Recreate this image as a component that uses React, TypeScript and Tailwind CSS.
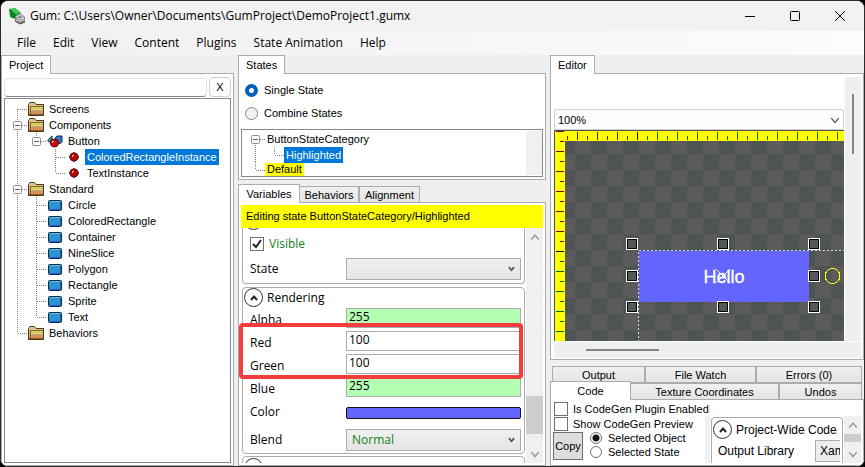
import React from "react";

const Chevron = ({ up, size = 8, color = "#555", w = 1.5 }: { up?: boolean; size?: number; color?: string; w?: number }) => (
  <svg width={size} height={size} viewBox="0 0 8 8" fill="none" stroke={color} strokeWidth={w}>
    <path d={up ? "M1 6 4 2.5 7 6" : "M1 2.5 4 6 7 2.5"} />
  </svg>
);

const Folder = () => (
  <svg width="16" height="14" viewBox="0 0 16 14">
    <path d="M.500 2.500 2 .5h4.500L8 2.500h7.500v11H.500z" fill="#d8b070" stroke="#4b3713" />
    <path d="M1 2.500 2.500 1h3.800L8 3h7v1H1z" fill="#d9c690" />
    <path d="M3 5h11v3.500H3z" fill="#d0d468" />
    <path d="M3 8.500h11v3.500H3z" fill="#cd9461" />
    <path d="M2.500 12V4.500H15M1 12.500h14" fill="none" stroke="#8a5a28" />
  </svg>
);

const Rect = () => (
  <svg width="14" height="11" viewBox="0 0 14 11">
    <rect x=".5" y=".5" width="13" height="10" rx="1" fill="#2c95d0" stroke="#06304a" />
    <path d="M2 1.500h10" stroke="#62c4e0" />
    <path d="M1.500 9.500h11v-7" fill="none" stroke="#2556c8" />
  </svg>
);

const Ball = () => (
  <svg width="10" height="10" viewBox="0 0 10 10">
    <path d="M5 .5 8 2l1.500 3L8 8 5 9.500 2 8 .5 5 2 2z" fill="#b40a0a" stroke="#4a0606" />
    <path d="M3 3h2v1H4v1H3z" fill="#ffb0a0" />
  </svg>
);

const Component = () => (
  <svg width="16" height="13" viewBox="0 0 16 13">
    <path d="M.5 5.500 5 1v6H2z" fill="#3f9c88" stroke="#14463c" />
    <path d="M8.500 2.500 10 1h5v6l-2 1.500H9z" fill="#3472c4" stroke="#0d2c58" />
    <circle cx="7.500" cy="8" r="4" fill="#cf0c0c" stroke="#4a0606" />
    <path d="M5 6h2v1H6v1H5z" fill="#ffc0b0" />
  </svg>
);

type Kind = "folder" | "rect" | "ball" | "component";
type Node = { label: string; kind: Kind; level: 0 | 1 | 2; open?: boolean; last?: boolean; rail?: boolean; first?: boolean; selected?: boolean };

const nodes: Node[] = [
  { label: "Screens", kind: "folder", level: 0, first: true },
  { label: "Components", kind: "folder", level: 0, open: true },
  { label: "Button", kind: "component", level: 1, open: true, last: true, rail: true },
  { label: "ColoredRectangleInstance", kind: "ball", level: 2, rail: true, selected: true },
  { label: "TextInstance", kind: "ball", level: 2, rail: true, last: true },
  { label: "Standard", kind: "folder", level: 0, open: true },
  { label: "Circle", kind: "rect", level: 1, rail: true },
  { label: "ColoredRectangle", kind: "rect", level: 1, rail: true },
  { label: "Container", kind: "rect", level: 1, rail: true },
  { label: "NineSlice", kind: "rect", level: 1, rail: true },
  { label: "Polygon", kind: "rect", level: 1, rail: true },
  { label: "Rectangle", kind: "rect", level: 1, rail: true },
  { label: "Sprite", kind: "rect", level: 1, rail: true },
  { label: "Text", kind: "rect", level: 1, rail: true, last: true },
  { label: "Behaviors", kind: "folder", level: 0, last: true },
];

/* One 19px wide cell of dotted guide lines in front of a tree item. */
const Guide = ({ up, down, across, box }: { up?: boolean; down?: boolean; across?: boolean; box?: boolean }) => (
  <svg className="shrink-0" width="19" height="16" viewBox="0 0 19 16">
    <g stroke="#808080" strokeDasharray="1 1">
      {up && <path d="M9.500 0v8" />}
      {down && <path d="M9.500 8v8" />}
      {across && <path d="M10 8.500h9" />}
    </g>
    {box && (
      <g transform="translate(5 4)">
        <rect x=".5" y=".5" width="8" height="8" rx="1" fill="#fcfcfc" stroke="#919191" />
        <path d="M2 4.500h5" stroke="#4b63a7" />
      </g>
    )}
  </svg>
);

const TreeRow = ({ n }: { n: Node }) => (
  <li className="flex h-4 items-center">
    {n.level === 1 && <Guide up={n.label === "Button" || n.rail} down={n.rail} />}
    {n.level === 2 && <Guide up={n.rail} down={n.rail} />}
    {n.level === 2 && <Guide />}
    <Guide up={!n.first} down={!n.last} across box={n.open} />
    <span className="mr-0.5 flex w-[18px] shrink-0 justify-center">
      {n.kind === "folder" && <Folder />}
      {n.kind === "rect" && <Rect />}
      {n.kind === "ball" && <Ball />}
      {n.kind === "component" && <Component />}
    </span>
    <span className={n.selected ? "bg-[#0078d7] px-0.5 leading-4 text-white" : "px-0.5 leading-4"}>{n.label}</span>
  </li>
);

const WpfScroll = ({ thumb }: { thumb: React.ReactNode }) => (
  <div className="flex w-[17px] shrink-0 flex-col items-center bg-[#f0f0f0] py-1">
    <Chevron up color="#999" size={10} w={1.2} />
    {thumb}
    <Chevron color="#999" size={10} w={1.2} />
  </div>
);

const Expander = () => (
  <button aria-label="Collapse" className="flex size-[19px] shrink-0 items-center justify-center rounded-full border border-[#333] bg-white">
    <Chevron up color="#222" w={2} />
  </button>
);

const Field = ({ label, value, fill }: { label: string; value: string; fill: string }) => (
  <label className="flex h-5 items-center">
    <span className="w-24 shrink-0 self-end">{label}</span>
    <input defaultValue={value} className={`h-5 w-full min-w-0 border border-[#abadb3] px-0.5 pb-[3px] outline-none ${fill}`} />
  </label>
);

const Select = ({ label, value, name }: { label: string; value: string; name: string }) => (
  <div className="flex items-center">
    <label htmlFor={name} className="w-24 shrink-0">{label}</label>
    <div className="grid min-w-0 flex-1 items-center">
      <select id={name} className="col-start-1 row-start-1 h-[22px] w-full appearance-none border border-[#acacac] bg-linear-to-b from-[#f0f0f0] to-[#e5e5e5] px-[5px] text-[#138013]">
        <option>{value}</option>
      </select>
      <span className="pointer-events-none col-start-1 row-start-1 mr-1.5 mb-0.5 justify-self-end">
        <Chevron size={7} w={2} />
      </span>
    </div>
  </div>
);

const Tab = ({ children }: { children: React.ReactNode }) => (
  <div className="flex">
    <button className="relative z-10 -mb-px h-[19px] border border-b-0 border-[#acacac] bg-white px-[7px] leading-4">{children}</button>
  </div>
);

const BackTab = ({ children, className }: { children: React.ReactNode; className: string }) => (
  <button className={`h-[17px] border border-[#acacac] bg-linear-to-b from-[#f0f0f0] to-[#e5e5e5] leading-[14px] ${className}`}>{children}</button>
);

const ticks = Array.from({ length: 120 }, (_, i) => i);

const Canvas = () => (
  <svg className="block h-[211px] w-full" shapeRendering="crispEdges">
    <defs>
      <pattern id="checks" x="21" y="24" width="32" height="32" patternUnits="userSpaceOnUse">
        <rect width="32" height="32" fill="#4e5353" />
        <rect x="16" width="16" height="16" fill="#5b5b5b" />
        <rect y="16" width="16" height="16" fill="#5b5b5b" />
      </pattern>
    </defs>
    <rect width="100%" height="211" fill="url(#checks)" />
    <rect width="100%" height="1" fill="#505050" />
    <rect width="1" height="211" fill="#505050" />
    <rect x="1" y="1" width="100%" height="10" fill="#ff0" />
    <rect x="1" y="1" width="10" height="210" fill="#ff0" />
    {ticks.map((i) => (
      <rect key={i} x={13 + i * 10} y={i % 2 ? 2 : 6} width="1" height={i % 2 ? 8 : 4} fill={i < 7 ? "#8b0000" : i === 7 ? "#000" : "#006400"} />
    ))}
    {ticks.slice(0, 21).map((i) => (
      <rect key={i} x={i % 2 ? 6 : 2} y={1 + i * 10} width={i % 2 ? 4 : 8} height="1" fill={i < 12 ? "#8b0000" : i === 12 ? "#000" : "#006400"} />
    ))}
    <rect x="85" y="121" width="170" height="51" fill="#6464ff" />
    <path d="M85 120.500h2000M84.500 122v89" stroke="#c3dde0" strokeDasharray="2 2" />
    <text x="170" y="153" textAnchor="middle" fontSize="18" fill="#fff" stroke="#fff" strokeWidth=".3" fontFamily="Liberation Sans, sans-serif">Hello</text>
    <path d="m162 139 14 14m0-14-14 14" stroke="#fff" />
    {[78, 169, 260].map((x) =>
      [114, 146, 177].map((y) =>
        x === 169 && y === 146 ? null : (
          <g key={`${x}-${y}`}>
            <rect x={x - 6} y={y - 6} width="12" height="12" fill="#fff" />
            <rect x={x - 5} y={y - 5} width="10" height="10" fill="#000" />
            <rect x={x - 4} y={y - 4} width="8" height="8" fill="#555858" />
          </g>
        ),
      )
    )}
    <circle cx="278.5" cy="146" r="7.500" fill="none" stroke="#ff0" />
  </svg>
);

const Logo = () => (
  <svg width="17" height="17" viewBox="0 0 17 17">
    <path d="M0 1 6 0l6 5-6 6-5-2z" fill="#1fae36" />
    <path d="m0 1 7 5v5L2 9z" fill="#0d7d20" />
    <path d="m1 1 5-1 5 4-4 2z" fill="#45c457" />
    <path d="m6 9 5-4 5 4v5l-5 2-5-3z" fill="#8a8a8a" />
    <path d="m7 9 4-2 4 3M7 12l4 1 4-2M8 10l3 1 3-1" fill="none" stroke="#e4e4e4" />
    <path d="m6 13 5 3 5-2" fill="none" stroke="#4a4a4a" />
  </svg>
);

export default function App() {
  return (
    <div className="h-screen min-h-[467px] bg-black font-['Liberation_Sans',Arial,sans-serif] text-[11px] leading-4 text-black">
      <div className="flex h-full flex-col overflow-hidden rounded-lg border border-[#2b2b2b] bg-[#efefef]">
        <header className="flex h-[30px] shrink-0 items-center bg-[#f2f2f2] font-['Open_Sans','Noto_Sans',sans-serif] text-[12px]">
          <span className="ml-2"><Logo /></span>
          <h1 className="ml-1 flex-1">Gum: C:\Users\Owner\Documents\GumProject\DemoProject1.gumx</h1>
          <div className="mr-[19px] flex gap-[35px]">
            <button aria-label="Minimize"><svg width="10" height="10" stroke="#000"><path d="M0 5.500h10" /></svg></button>
            <button aria-label="Maximize"><svg width="10" height="10" stroke="#000" fill="none"><rect x=".5" y=".5" width="9" height="9" rx="1" /></svg></button>
            <button aria-label="Close"><svg width="10" height="10" stroke="#000"><path d="m0 0 10 10M10 0 0 10" /></svg></button>
          </div>
        </header>
        <nav className="flex h-6 shrink-0 items-center gap-[17px] bg-linear-to-r from-[#f0f0f0] to-[#fcfcfc] pl-4 font-['Open_Sans','Noto_Sans',sans-serif] text-[12px]">
          {["File", "Edit", "View", "Content", "Plugins", "State Animation", "Help"].map((m) => (
            <button key={m}>{m}</button>
          ))}
        </nav>

        <main className="flex min-h-0 flex-1 gap-1">
          <section className="flex w-[233px] shrink-0 flex-col">
            <Tab>Project</Tab>
            <div className="flex min-h-0 flex-1 flex-col border border-[#acacac] bg-white p-0.5">
              <div className="flex h-[22px] items-center gap-0.5">
                <input aria-label="Search" className="h-[19px] min-w-0 flex-1 rounded-sm border border-[#e3e3e3] border-b-[#868686] outline-none" />
                <button className="h-5 w-[22px] rounded-sm border border-[#d0d0d0] bg-[#fdfdfd]">X</button>
              </div>
              <ul className="flex-1 border border-[#828790] pt-0.5 pl-[3px]">
                {nodes.map((n) => <TreeRow key={n.label} n={n} />)}
              </ul>
            </div>
          </section>

          <section className="relative flex w-[308px] shrink-0 flex-col">
            <Tab>States</Tab>
            <div className="flex h-[107px] shrink-0 flex-col border border-[#acacac] bg-white p-0.5">
              <div className="mt-1.5 flex flex-col gap-[7px]">
                {["Single State", "Combine States"].map((s, i) => (
                  <label key={s} className="flex h-4 items-center gap-1.5 pl-1">
                    <input type="radio" name="mode" defaultChecked={!i} className="size-[13px] appearance-none rounded-full border border-[#858585] bg-[#f3f3f3] checked:border-4 checked:border-[#005fb8] checked:bg-white" />
                    {s}
                  </label>
                ))}
              </div>
              <div className="mt-2 flex h-12 justify-between border border-[#828790] pl-1">
                <ul className="pt-px">
                  <li className="flex h-4 items-center"><Guide down across box /><span className="px-0.5">ButtonStateCategory</span></li>
                  <li className="flex h-4 items-center"><Guide up down /><Guide up across /><span className="bg-[#0078d7] px-0.5 text-white">Highlighted</span></li>
                  <li className="flex h-[13px] items-center"><Guide up across /><span className="bg-[#ff0] px-0.5 leading-[13px]">Default</span></li>
                </ul>
                <div className="my-px w-4 bg-[#f0f0f0]" />
              </div>
            </div>

            <div className="relative z-10 mt-1 -mb-px flex items-end">
              <button className="h-[19px] w-[62px] border border-b-0 border-[#acacac] bg-white">Variables</button>
              <BackTab className="-ml-px w-[60px]">Behaviors</BackTab>
              <BackTab className="w-[61px]">Alignment</BackTab>
            </div>
            <div className="flex min-h-0 flex-1 flex-col border border-[#acacac] bg-white p-0.5">
              <p className="h-[23px] shrink-0 bg-[#ff0] pl-[5px] leading-[23px]">Editing state ButtonStateCategory/Highlighted</p>
              <div className="flex min-h-0 flex-1 font-['Open_Sans','Noto_Sans',sans-serif] text-[12px]">
                <div className="mr-px min-w-0 flex-1 overflow-hidden pl-px">
                  <div className="flex h-14 flex-col rounded-b border border-t-0 border-[#acacac]">
                    <div className="flex h-0.5 items-end overflow-hidden pl-px"><Expander /></div>
                    <div className="pr-[3px] pl-[7px]">
                      <label className="mt-[6px] flex items-center gap-[5px] text-[#138013]">
                        <input type="checkbox" defaultChecked className="size-[14px] appearance-none border border-[#707070] bg-white" />
                        <svg className="pointer-events-none -ml-[19px] size-[14px]" viewBox="0 0 14 14" fill="none" stroke="#222" strokeWidth="2"><path d="m3 7 3 3 5-7" /></svg>
                        Visible
                      </label>
                      <div className="mt-[6px]"><Select label="State" value="" name="state" /></div>
                    </div>
                  </div>
                  <div className="mt-[3px] rounded border border-[#acacac] pb-0.5">
                    <div className="flex items-center gap-1 pl-px"><Expander /><h2>Rendering</h2></div>
                    <div className="mt-px flex flex-col gap-[3px] pr-[3px] pl-[7px]">
                      <Field label="Alpha" value="255" fill="bg-[#b4ffb4]" />
                      <Field label="Red" value="100" fill="bg-white" />
                      <Field label="Green" value="100" fill="bg-white" />
                      <Field label="Blue" value="255" fill="bg-[#b4ffb4]" />
                      <div className="mt-0.5 flex h-5 items-center">
                        <span className="w-24 shrink-0">Color</span>
                        <button aria-label="Pick color" className="mt-0.5 h-3 flex-1 rounded-xs border border-[#111] bg-[#6464ff]" />
                      </div>
                      <div className="mt-1"><Select label="Blend" value="Normal" name="blend" /></div>
                    </div>
                  </div>
                  <div className="mt-0.5 rounded border border-[#acacac] p-px"><Expander /></div>
                </div>
                <WpfScroll thumb={<div className="mt-auto mb-[15px] h-[38px] w-full bg-[#cdcdcd]" />} />
              </div>
            </div>
            <div className="pointer-events-none absolute top-[268px] right-[23px] left-px h-[56px] rounded border-4 border-[#f43c3c]" />
          </section>

          <section className="flex min-w-0 flex-1 flex-col">
            <Tab>Editor</Tab>
            <div className="flex h-[287px] shrink-0 flex-col border border-[#acacac] bg-white pt-[3px] pr-0.5 pl-[3px]">
              <div className="flex h-[264px] gap-px">
                <div className="flex min-w-0 flex-1 flex-col justify-end">
                  <div className="grid items-center">
                    <select aria-label="Zoom" className="col-start-1 row-start-1 h-[21px] appearance-none rounded-xs border border-[#d0d0d0] bg-[#fdfdfd] px-[3px]"><option>100%</option></select>
                    <span className="pointer-events-none col-start-1 row-start-1 mr-1 justify-self-end"><Chevron size={10} w={1} /></span>
                  </div>
                  <Canvas />
                </div>
                <div className="flex w-4 justify-center bg-[#efefef] pt-[17px]"><div className="h-[60px] w-0.5 bg-[#858585]" /></div>
              </div>
              <div className="mt-px flex h-4 items-center bg-[#efefef] pl-8"><div className="h-0.5 w-[73px] bg-[#858585]" /></div>
            </div>

            <div className="mt-1.5 flex pr-0.5 pl-0.5">
              <BackTab className="w-[93px]">Output</BackTab>
              <BackTab className="w-[111px]">File Watch</BackTab>
              <BackTab className="flex-1">Errors (0)</BackTab>
            </div>
            <div className="relative z-10 -mt-0.5 -mb-px flex items-end pr-0.5">
              <button className="h-[19px] w-[81px] border border-b-0 border-[#acacac] bg-white">Code</button>
              <BackTab className="-ml-px w-[149px]">Texture Coordinates</BackTab>
              <BackTab className="flex-1">Undos</BackTab>
            </div>
            <div className="flex min-h-0 flex-1 flex-col border border-[#acacac] bg-white p-0.5">
              <label className="flex h-[14px] items-center gap-[5px] pl-px">
                <input type="checkbox" className="size-[14px] appearance-none border border-[#707070]" />Is CodeGen Plugin Enabled
              </label>
              <div className="flex min-h-0 flex-1">
                <div className="w-[152px] shrink-0">
                  <label className="mt-px flex h-[14px] items-center gap-[5px] pl-px">
                    <input type="checkbox" className="size-[14px] appearance-none border border-[#707070]" />Show CodeGen Preview
                  </label>
                  <div className="flex gap-[7px]">
                    <button className="mt-px h-7 w-[30px] border border-[#707070] bg-[#ddd]">Copy</button>
                    <div>
                      {["Selected Object", "Selected State"].map((s, i) => (
                        <label key={s} className="flex h-[14px] items-center gap-[6px]">
                          <input type="radio" name="target" defaultChecked={!i} className="size-[12px] appearance-none rounded-full border border-[#707070] checked:bg-[radial-gradient(circle,#111_3px,#fff_4px)]" />{s}
                        </label>
                      ))}
                    </div>
                  </div>
                </div>
                <div className="flex min-w-0 flex-1 text-[12px]">
                  <div className="mr-px w-[5px] bg-[#f0f0f0]" />
                  <div className="mt-px mr-px min-w-0 flex-1 overflow-hidden rounded-t border border-b-0 border-[#acacac] pr-0.5">
                    <div className="overflow-hidden whitespace-nowrap">
                      <div className="mt-0.5 flex items-center gap-1 pl-px"><Expander /><h2>Project-Wide Code Generation</h2></div>
                      <div className="mt-px flex items-center pl-1.5">
                        <span className="w-[97px] shrink-0">Output Library</span>
                        <button className="h-[22px] w-20 shrink-0 border border-[#acacac] bg-[#eee] pl-1 text-left">XamarinForms</button>
                      </div>
                    </div>
                  </div>
                  <WpfScroll thumb={<div className="mt-1 mb-auto h-2 w-full bg-[#cdcdcd]" />} />
                </div>
              </div>
            </div>
          </section>
        </main>
      </div>
    </div>
  );
}
